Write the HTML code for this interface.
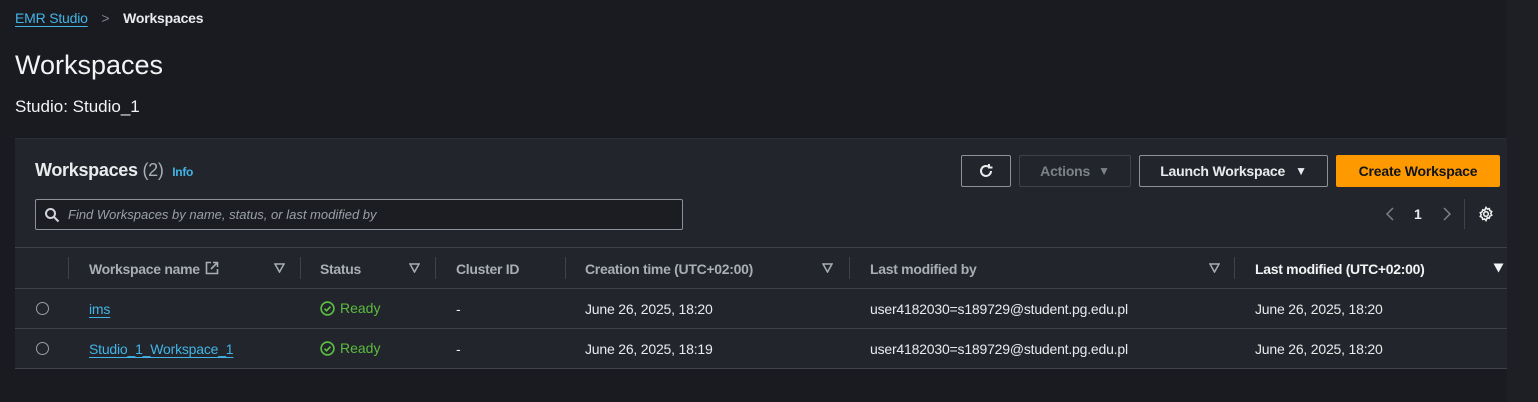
<!DOCTYPE html>
<html><head><style>
*{box-sizing:border-box;margin:0;padding:0}
body{width:1538px;height:402px;background:#1a1b21;font-family:"Liberation Sans",sans-serif;color:#d1d5db;position:relative;overflow:hidden;font-size:14px}
.abs{position:absolute;white-space:nowrap}
a{color:#42b4e6;text-decoration:underline;text-underline-offset:3px}
.cont{position:absolute;left:15px;top:138px;width:1492px;height:230px;background:#22252c;border-top:1px solid #2a2e35}
.btn{position:absolute;top:16px;height:32px;border:1px solid #8d9199;border-radius:2px;font-weight:bold;font-size:14px;display:flex;align-items:center;justify-content:center;color:#e9ebed;letter-spacing:-0.2px}
.hdr{position:absolute;top:108px;left:0;width:1492px;height:42px;border-top:1px solid #3e434b;border-bottom:1px solid #3e434b}
.th{position:absolute;top:13px;font-weight:bold;color:#a9adb4;font-size:14px;letter-spacing:-0.3px}
.sep{position:absolute;top:9px;width:1px;height:22px;background:#3e434b}
.row{position:absolute;left:0;width:1492px;height:40px;border-bottom:1px solid #3e434b}
.td{position:absolute;top:12px;font-size:14px;color:#e9ebed;white-space:nowrap;letter-spacing:-0.2px}
.radio{position:absolute;left:21px;top:13px;width:13px;height:13px;border:1.5px solid #9ba0a8;border-radius:50%}
.tri{position:absolute;top:15px}
.okc{position:absolute;color:#5bbd3f;font-size:14px;display:flex;align-items:center;gap:5px}
</style></head><body>
<div class="abs" style="left:15px;top:10px;font-size:14px;letter-spacing:-0.2px"><a>EMR Studio</a> <span style="color:#7d8189;margin:0 10px">&gt;</span> <b style="color:#e9ebed">Workspaces</b></div>
<div class="abs" style="left:15px;top:50px;font-size:27px;color:#f2f3f4">Workspaces</div>
<div class="abs" style="left:15px;top:97px;font-size:17px;color:#f2f3f4">Studio: Studio_1</div>
<div class="cont">
 <div class="abs" style="left:20px;top:21px;font-size:18px;font-weight:bold;color:#e9ebed;letter-spacing:-0.3px">Workspaces <span style="font-weight:normal;color:#a9adb4">(2)</span> <span style="font-size:12px;color:#42b4e6;margin-left:4px">Info</span></div>
 <div class="btn" style="left:946px;width:50px"><svg width="18" height="18" viewBox="0 0 18 18" fill="none" stroke="#e9ebed" stroke-width="2"><path d="M14 9a5 5 0 1 1-2-4"/><path d="M12 2v3.5h3.5"/></svg></div>
 <div class="btn" style="left:1004px;width:112px;border-color:#3e434b;color:#7d8189">Actions <span style="font-size:12px;margin-left:8px">▼</span></div>
 <div class="btn" style="left:1124px;width:189px">Launch Workspace <span style="font-size:12px;margin-left:10px">▼</span></div>
 <div class="btn" style="left:1321px;width:164px;background:#ff9900;border-color:#ff9900;color:#0f141a">Create Workspace</div>
 <div class="abs" style="left:20px;top:60px;width:648px;height:31px;border:1px solid #8d9199;border-radius:2px;background:#1b1d23">
  <svg class="abs" style="left:8px;top:7px" width="16" height="16" viewBox="0 0 16 16" fill="none" stroke="#d1d5db" stroke-width="2"><circle cx="6.5" cy="6.5" r="4.5"/><path d="M10 10l4.5 4.5"/></svg>
  <span class="abs" style="left:32px;top:7px;font-style:italic;color:#9ba0a8;font-size:13px">Find Workspaces by name, status, or last modified by</span>
 </div>
 <svg class="abs" style="left:1371px;top:68px" width="8" height="14" viewBox="0 0 8 14" fill="none" stroke="#7d8189" stroke-width="1.5"><path d="M7 1L1 7l6 6"/></svg>
 <div class="abs" style="left:1399px;top:67px;font-weight:bold;color:#e9ebed">1</div>
 <svg class="abs" style="left:1428px;top:68px" width="8" height="14" viewBox="0 0 8 14" fill="none" stroke="#7d8189" stroke-width="1.5"><path d="M1 1l6 6-6 6"/></svg>
 <div class="abs" style="left:1449px;top:60px;width:1px;height:30px;background:#3e434b"></div>
 <svg class="abs" style="left:1463px;top:67px" width="16" height="16" viewBox="0 0 16 16" fill="none" stroke="#e9ebed" stroke-width="1.6"><circle cx="8" cy="8" r="2.3"/><path d="M8 1.5l1.3 1.6 2-.5.5 2 1.9.9-.9 1.9.9 1.9-1.9.9-.5 2-2-.5L8 14.5l-1.3-1.6-2 .5-.5-2-1.9-.9.9-1.9-.9-1.9 1.9-.9.5-2 2 .5z"/></svg>
 <div class="hdr">
  <div class="sep" style="left:53px"></div>
  <div class="th" style="left:74px">Workspace name</div>
  <svg class="abs" style="left:190px;top:13px" width="14" height="14" viewBox="0 0 14 14" fill="none" stroke="#a9adb4" stroke-width="1.6"><path d="M6 1.5H1.5v11h11V8"/><path d="M8 1.5h4.5V6M12.5 1.5L6 8"/></svg>
  <svg class="tri" style="left:259px" width="11" height="10" viewBox="0 0 11 10"><path d="M1 1h9L5.5 9z" fill="none" stroke="#a9adb4" stroke-width="1.5"/></svg>
  <div class="sep" style="left:285px"></div>
  <div class="th" style="left:305px">Status</div>
  <svg class="tri" style="left:394px" width="11" height="10" viewBox="0 0 11 10"><path d="M1 1h9L5.5 9z" fill="none" stroke="#a9adb4" stroke-width="1.5"/></svg>
  <div class="sep" style="left:420px"></div>
  <div class="th" style="left:441px">Cluster ID</div>
  <div class="sep" style="left:550px"></div>
  <div class="th" style="left:570px">Creation time (UTC+02:00)</div>
  <svg class="tri" style="left:807px" width="11" height="10" viewBox="0 0 11 10"><path d="M1 1h9L5.5 9z" fill="none" stroke="#a9adb4" stroke-width="1.5"/></svg>
  <div class="sep" style="left:834px"></div>
  <div class="th" style="left:855px">Last modified by</div>
  <svg class="tri" style="left:1194px" width="11" height="10" viewBox="0 0 11 10"><path d="M1 1h9L5.5 9z" fill="none" stroke="#a9adb4" stroke-width="1.5"/></svg>
  <div class="sep" style="left:1219px"></div>
  <div class="th" style="left:1240px;color:#f2f3f4">Last modified (UTC+02:00)</div>
  <svg class="tri" style="left:1478px" width="11" height="10" viewBox="0 0 11 10"><path d="M0.5 0.5h10L5.5 9.5z" fill="#f2f3f4"/></svg>
 </div>
 <div class="row" style="top:150px">
  <div class="radio"></div><div class="td" style="left:74px"><a>ims</a></div>
  <div class="td" style="left:441px">-</div><div class="td" style="left:570px">June 26, 2025, 18:20</div>
  <div class="td" style="left:855px">user4182030=s189729@student.pg.edu.pl</div><div class="td" style="left:1240px">June 26, 2025, 18:20</div>
 </div>
 <div class="row" style="top:190px">
  <div class="radio"></div><div class="td" style="left:74px"><a>Studio_1_Workspace_1</a></div>
  <div class="td" style="left:441px">-</div><div class="td" style="left:570px">June 26, 2025, 18:19</div>
  <div class="td" style="left:855px">user4182030=s189729@student.pg.edu.pl</div><div class="td" style="left:1240px">June 26, 2025, 18:20</div>
 </div>
</div>
<div class="okc" style="left:320px;top:300px"><svg width="15" height="15" viewBox="0 0 16 16" fill="none" stroke="#5bbd3f" stroke-width="1.8"><circle cx="8" cy="8" r="6.8"/><path d="M4.8 8.2l2.2 2.2 4.2-4.4"/></svg>Ready</div>
<div class="okc" style="left:320px;top:340px"><svg width="15" height="15" viewBox="0 0 16 16" fill="none" stroke="#5bbd3f" stroke-width="1.8"><circle cx="8" cy="8" r="6.8"/><path d="M4.8 8.2l2.2 2.2 4.2-4.4"/></svg>Ready</div>
<div style="position:absolute;left:1507px;top:0;width:31px;height:402px;background:#1e1f25"></div>
</body></html>
